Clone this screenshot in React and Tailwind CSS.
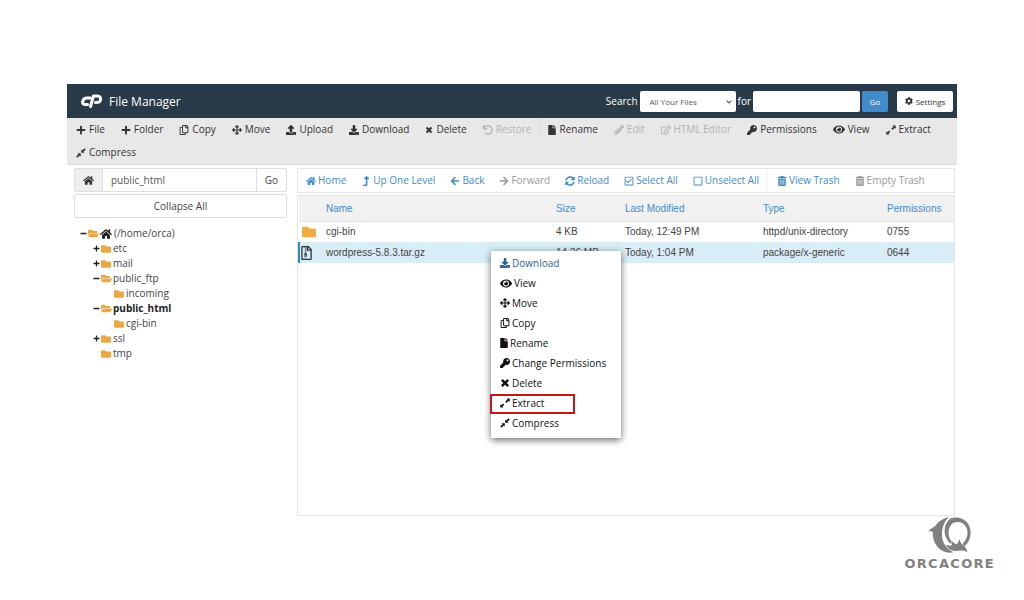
import {
  FaPlus,
  FaMinus,
  FaRegCopy,
  FaArrowsAlt,
  FaUpload,
  FaDownload,
  FaUndo,
  FaFile,
  FaPencilAlt,
  FaRegEdit,
  FaKey,
  FaEye,
  FaHome,
  FaCog,
  FaLevelUpAlt,
  FaArrowLeft,
  FaArrowRight,
  FaSyncAlt,
  FaRegCheckSquare,
  FaRegSquare,
  FaTrashAlt,
  FaFolder,
  FaFolderOpen,
  FaRegFileArchive,
  FaChevronDown,
} from "react-icons/fa";

const CpanelLogo = () => (
  <svg
    viewBox="0 0 22 14"
    className="h-3.5 w-[22px]"
    fill="none"
    stroke="currentColor"
    strokeWidth="3"
    strokeLinecap="round"
    strokeLinejoin="round"
  >
    <path d="M9.500 4H6C1.500 4-.200 10.500 4 10.500h2.500" />
    <path d="M9.500 12.500L12.500 2H16.500C21 2 20.500 8.500 16 8.500H14.500" />
  </svg>
);

const ExtractIcon = ({ className }) => (
  <svg viewBox="0 0 20 20" className={className} fill="currentColor">
    <path d="M13 1h6.500v6.500l-2-2-4.500 4.500-2.500-2.500 4.500-4.500zM.500 19v-6.500l2 2 3.500-3.500 2.500 2.500-3.500 3.500 2 2z" />
  </svg>
);

const CompressIcon = ({ className }) => (
  <svg viewBox="0 0 20 20" className={className} fill="currentColor">
    <path d="M10.500 3v6.500H17l-2-2 4.500-4.500L17 .500 12.500 5zM9.500 10.500H3l2 2L.500 17 3 19.500 7.500 15l2 2z" />
  </svg>
);

const CrossIcon = ({ className }) => (
  <svg viewBox="0 0 20 20" className={className} fill="currentColor">
    <path d="M2 5.500L5.500 2 10 6.500 14.500 2 18 5.500 13.500 10 18 14.500 14.500 18 10 13.500 5.500 18 2 14.500 6.500 10z" />
  </svg>
);

const NARROW = "h-[10px] w-2";
const WIDE = "h-[11px] w-3";

const actions = [
  { label: "File", icon: FaPlus },
  { label: "Folder", icon: FaPlus },
  { label: "Copy", icon: FaRegCopy },
  { label: "Move", icon: FaArrowsAlt },
  { label: "Upload", icon: FaUpload },
  { label: "Download", icon: FaDownload },
  { label: "Delete", icon: CrossIcon, size: NARROW },
  { label: "Restore", icon: FaUndo, disabled: true, divider: true },
  { label: "Rename", icon: FaFile, size: NARROW },
  { label: "Edit", icon: FaPencilAlt, disabled: true },
  { label: "HTML Editor", icon: FaRegEdit, disabled: true },
  { label: "Permissions", icon: FaKey },
  { label: "View", icon: FaEye, size: WIDE },
  { label: "Extract", icon: ExtractIcon },
  { label: "Compress", icon: CompressIcon },
];

const navigation = [
  { label: "Home", icon: FaHome },
  { label: "Up One Level", icon: FaLevelUpAlt },
  { label: "Back", icon: FaArrowLeft },
  { label: "Forward", icon: FaArrowRight, disabled: true },
  { label: "Reload", icon: FaSyncAlt },
  { label: "Select All", icon: FaRegCheckSquare },
  { label: "Unselect All", icon: FaRegSquare, divider: true },
  { label: "View Trash", icon: FaTrashAlt },
  { label: "Empty Trash", icon: FaTrashAlt, disabled: true },
];

const menuItems = [
  { label: "Download", icon: FaDownload, active: true },
  { label: "View", icon: FaEye, size: WIDE },
  { label: "Move", icon: FaArrowsAlt },
  { label: "Copy", icon: FaRegCopy },
  { label: "Rename", icon: FaFile, size: NARROW },
  { label: "Change Permissions", icon: FaKey },
  { label: "Delete", icon: CrossIcon },
  { label: "Extract", icon: ExtractIcon, marked: true },
  { label: "Compress", icon: CompressIcon },
];

const tree = {
  name: "(/home/orca)",
  open: true,
  home: true,
  children: [
    { name: "etc", expandable: true },
    { name: "mail", expandable: true },
    { name: "public_ftp", open: true, children: [{ name: "incoming" }] },
    {
      name: "public_html",
      open: true,
      current: true,
      children: [{ name: "cgi-bin" }],
    },
    { name: "ssl", expandable: true },
    { name: "tmp" },
  ],
};

const files = [
  {
    name: "cgi-bin",
    size: "4 KB",
    modified: "Today, 12:49 PM",
    type: "httpd/unix-directory",
    permissions: "0755",
    folder: true,
  },
  {
    name: "wordpress-5.8.3.tar.gz",
    size: "14.36 MB",
    modified: "Today, 1:04 PM",
    type: "package/x-generic",
    permissions: "0644",
    selected: true,
  },
];

const Header = () => (
  <header className="flex h-[34px] items-center bg-[#293a4a] pr-1 pl-3.5 text-white">
    <CpanelLogo />
    <h1 className="ml-1.5 text-[12px]">File Manager</h1>
    <form className="ml-auto flex items-center">
      <label htmlFor="scope" className="mr-0.5">
        Search
      </label>
      <div className="relative">
        <select
          id="scope"
          className="h-[21px] w-24 appearance-none rounded-xs bg-white pl-2.5 text-[8px] text-[#555]"
        >
          <option>All Your Files</option>
        </select>
        <FaChevronDown className="pointer-events-none absolute top-2 right-1 size-1.5 text-[#444]" />
      </div>
      <label htmlFor="query" className="mx-0.5">
        for
      </label>
      <input
        id="query"
        type="text"
        className="h-[21px] w-[107px] rounded-xs bg-white px-2 text-[#555]"
      />
      <button
        type="button"
        className="ml-0.5 h-[21px] w-[26px] rounded-xs bg-[#428bca] text-[8px]"
      >
        Go
      </button>
      <button
        type="button"
        className="ml-[9px] flex h-[21px] w-14 items-center justify-center gap-[3px] rounded-xs bg-white text-[8px] text-[#333]"
      >
        <FaCog className="size-2" />
        Settings
      </button>
    </form>
  </header>
);

const Toolbar = () => (
  <div className="flex flex-wrap border-b border-[#dcdcdc] bg-[#e8e8e8] pl-px">
    {actions.map(({ label, icon: Icon, size, disabled, divider }) => (
      <button
        key={label}
        type="button"
        disabled={disabled}
        className={`flex h-[23px] items-center gap-[3px] px-2 text-[#333] disabled:text-[#b4b4b4] ${
          divider ? "border-r border-[#e2e2e2]" : ""
        }`}
      >
        <Icon className={size || "size-[10px]"} />
        {label}
      </button>
    ))}
  </div>
);

const TreeNode = ({ node }) => {
  const Folder = node.open ? FaFolderOpen : FaFolder;

  return (
    <li>
      <div
        className={`flex h-[15px] items-center gap-px ${
          node.current ? "font-bold text-[#222]" : ""
        }`}
      >
        <span className="w-[7px] text-[#222]">
          {node.open && <FaMinus className="size-[7px]" />}
          {node.expandable && <FaPlus className="size-[7px]" />}
        </span>
        <Folder
          className={`text-[#e9a844] ${
            node.open ? "size-[11px]" : "mr-px size-[10px]"
          }`}
        />
        {node.home && <FaHome className="mr-px size-[12px] text-[#222]" />}
        <span>{node.name}</span>
      </div>
      {node.children && (
        <ul className="pl-[13px]">
          {node.children.map((child) => (
            <TreeNode key={child.name} node={child} />
          ))}
        </ul>
      )}
    </li>
  );
};

const Sidebar = () => (
  <aside className="w-[213px] shrink-0">
    <form className="flex h-6 rounded-xs border border-[#ddd]">
      <button
        type="button"
        aria-label="Home directory"
        className="flex w-7 items-center justify-center border-r border-[#ddd] bg-[#eee] text-[#333]"
      >
        <FaHome className="size-[11px]" />
      </button>
      <input
        type="text"
        aria-label="Path"
        defaultValue="public_html"
        className="min-w-0 flex-1 px-2 text-[#555]"
      />
      <button type="button" className="w-[30px] border-l border-[#ddd]">
        Go
      </button>
    </form>
    <button
      type="button"
      className="mt-0.5 h-6 w-full rounded-xs border border-[#ddd]"
    >
      Collapse All
    </button>
    <ul className="mt-2 pl-1.5">
      <TreeNode node={tree} />
    </ul>
  </aside>
);

const ContextMenu = () => (
  <ul className="absolute top-[55px] left-[193px] w-[130px] bg-white pt-0.5 pb-[5px] shadow-[0_2px_7px_rgba(0,0,0,0.6)]">
    {menuItems.map(({ label, icon: Icon, size, active, marked }) => (
      <li key={label} className="relative">
        <button
          type="button"
          className={`flex h-5 w-full items-center gap-0.5 pl-[9px] ${
            active ? "text-[#2d5f94]" : "text-[#111]"
          }`}
        >
          <Icon className={size || "size-[10px]"} />
          {label}
        </button>
        {marked && (
          <span className="pointer-events-none absolute top-px -bottom-px -left-px w-[85px] border-2 border-[#c4161c]" />
        )}
      </li>
    ))}
  </ul>
);

const FileTable = () => (
  <div className="relative mt-0.5 min-h-[321px] border border-[#e5e5e5]">
    <table className="w-full table-fixed text-left font-['Liberation_Sans',Arial,sans-serif]">
      <colgroup>
        <col className="w-[27px]" />
        <col />
        <col className="w-[69px]" />
        <col className="w-[138px]" />
        <col className="w-[124px]" />
        <col className="w-[67px]" />
      </colgroup>
      <thead className="border-b border-[#e0e0e0] bg-[#f1f1f1] text-[#428bca]">
        <tr className="h-[25px]">
          <th aria-label="Icon" />
          <th className="font-normal">Name</th>
          <th className="font-normal">Size</th>
          <th className="font-normal">Last Modified</th>
          <th className="font-normal">Type</th>
          <th className="font-normal">Permissions</th>
        </tr>
      </thead>
      <tbody>
        {files.map((file) => (
          <tr
            key={file.name}
            className={`h-[21px] ${file.selected ? "bg-[#d9edf7]" : ""}`}
          >
            <td
              className={
                file.selected ? "border-l-2 border-[#2a8fbd] pl-px" : "pl-[3px]"
              }
            >
              {file.folder ? (
                <FaFolder className="size-[14px] text-[#efac43]" />
              ) : (
                <FaRegFileArchive className="h-[14px] w-[11px] text-[#333]" />
              )}
            </td>
            <td>{file.name}</td>
            <td>{file.size}</td>
            <td>{file.modified}</td>
            <td>{file.type}</td>
            <td>{file.permissions}</td>
          </tr>
        ))}
      </tbody>
    </table>
    <ContextMenu />
  </div>
);

const OrcaLogo = () => (
  <div className="mr-[29px] flex flex-col items-center self-end text-[#808080]">
    <svg viewBox="106 34 136 116" className="h-[38px] w-[45px]" fill="currentColor">
      <path d="M172 38c-22 4-34 16-42 27-8 4-16 8-20 16 5-1 9-1 13 1-2 30 14 54 38 62 9 3 18 3 26 1-24-11-38-33-36-58 1-21 9-38 21-49z" />
      <path d="M176 42c20-8 46-1 57 20 11 23 5 49-13 65l-5-9c14-14 18-34 10-50-8-15-22-19-37-14-20 10-22 42-7 58l-2 8c-25-20-27-57-3-78z" />
      <path d="M180 108c4 7 10 11 17 12l8-16c1 9 4 14 10 18 6 5 11 12 14 22-10-6-22-6-36-3-14 0-24-8-30-19 7 3 13 3 18 1 1-5 1-10-1-15z" />
    </svg>
    <p className="mt-0.5 font-['DejaVu_Sans',sans-serif] text-[13px] leading-[15px] font-bold tracking-widest">
      ORCACORE
    </p>
  </div>
);

const App = () => {
  return (
    <div className="flex min-h-screen flex-col bg-white pt-[84px] font-['Open_Sans','Noto_Sans',sans-serif] text-[10px] leading-[15px] text-[#444]">
      <div className="mx-[67px]">
        <Header />
        <Toolbar />
        <div className="flex gap-2.5 pt-[3px] pr-0.5 pl-[7px]">
          <Sidebar />
          <main className="min-w-0 flex-1">
            <nav className="flex h-[25px] items-center border border-[#e5e5e5]">
              {navigation.map(({ label, icon: Icon, disabled, divider }) => (
                <button
                  key={label}
                  type="button"
                  disabled={disabled}
                  className={`flex h-full items-center gap-0.5 pr-[7px] pl-2 text-[#428bca] disabled:text-[#999] ${
                    divider ? "mr-0.5 border-r border-[#eee]" : ""
                  }`}
                >
                  <Icon className="size-[10px]" />
                  {label}
                </button>
              ))}
            </nav>
            <FileTable />
          </main>
        </div>
      </div>
      <OrcaLogo />
    </div>
  );
};

export default App;
